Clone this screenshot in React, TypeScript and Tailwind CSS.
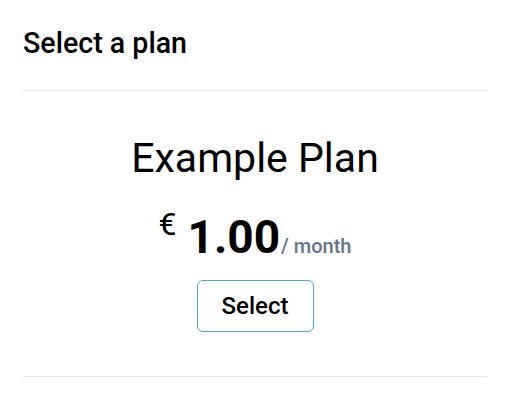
export default function App() {
  return (
    <div className="min-h-screen bg-white px-[23px] text-black" style={{ fontFamily: 'Roboto, "Noto Sans", sans-serif' }}>
      {/* Header */}
      <div className="pt-[25px] pb-[29px] border-b border-[#e2e8f0]">
        <h2 className="text-[28.6px] leading-[36px] font-medium">Select a plan</h2>
      </div>

      {/* Plan */}
      <div className="flex flex-col items-center pt-[43px] pb-[44px] border-b border-[#e2e8f0]">
        <h3 className="text-[41px] leading-[48px] font-normal">Example Plan</h3>
        <div className="flex items-baseline mt-[29px] h-[52px]">
          <span className="text-[32px] leading-none relative -top-[18px] mr-[11px]">€</span>
          <span className="text-[46px] leading-[52px] font-bold">1.00</span>
          <span className="text-[20px] font-medium text-[#64748b] ml-[1px]">/ month</span>
        </div>
        <button className="mt-[17px] h-[52px] w-[117px] rounded-[6px] border border-[#4aaeba] text-[24px] font-medium">
          Select
        </button>
      </div>
    </div>
  )
}
